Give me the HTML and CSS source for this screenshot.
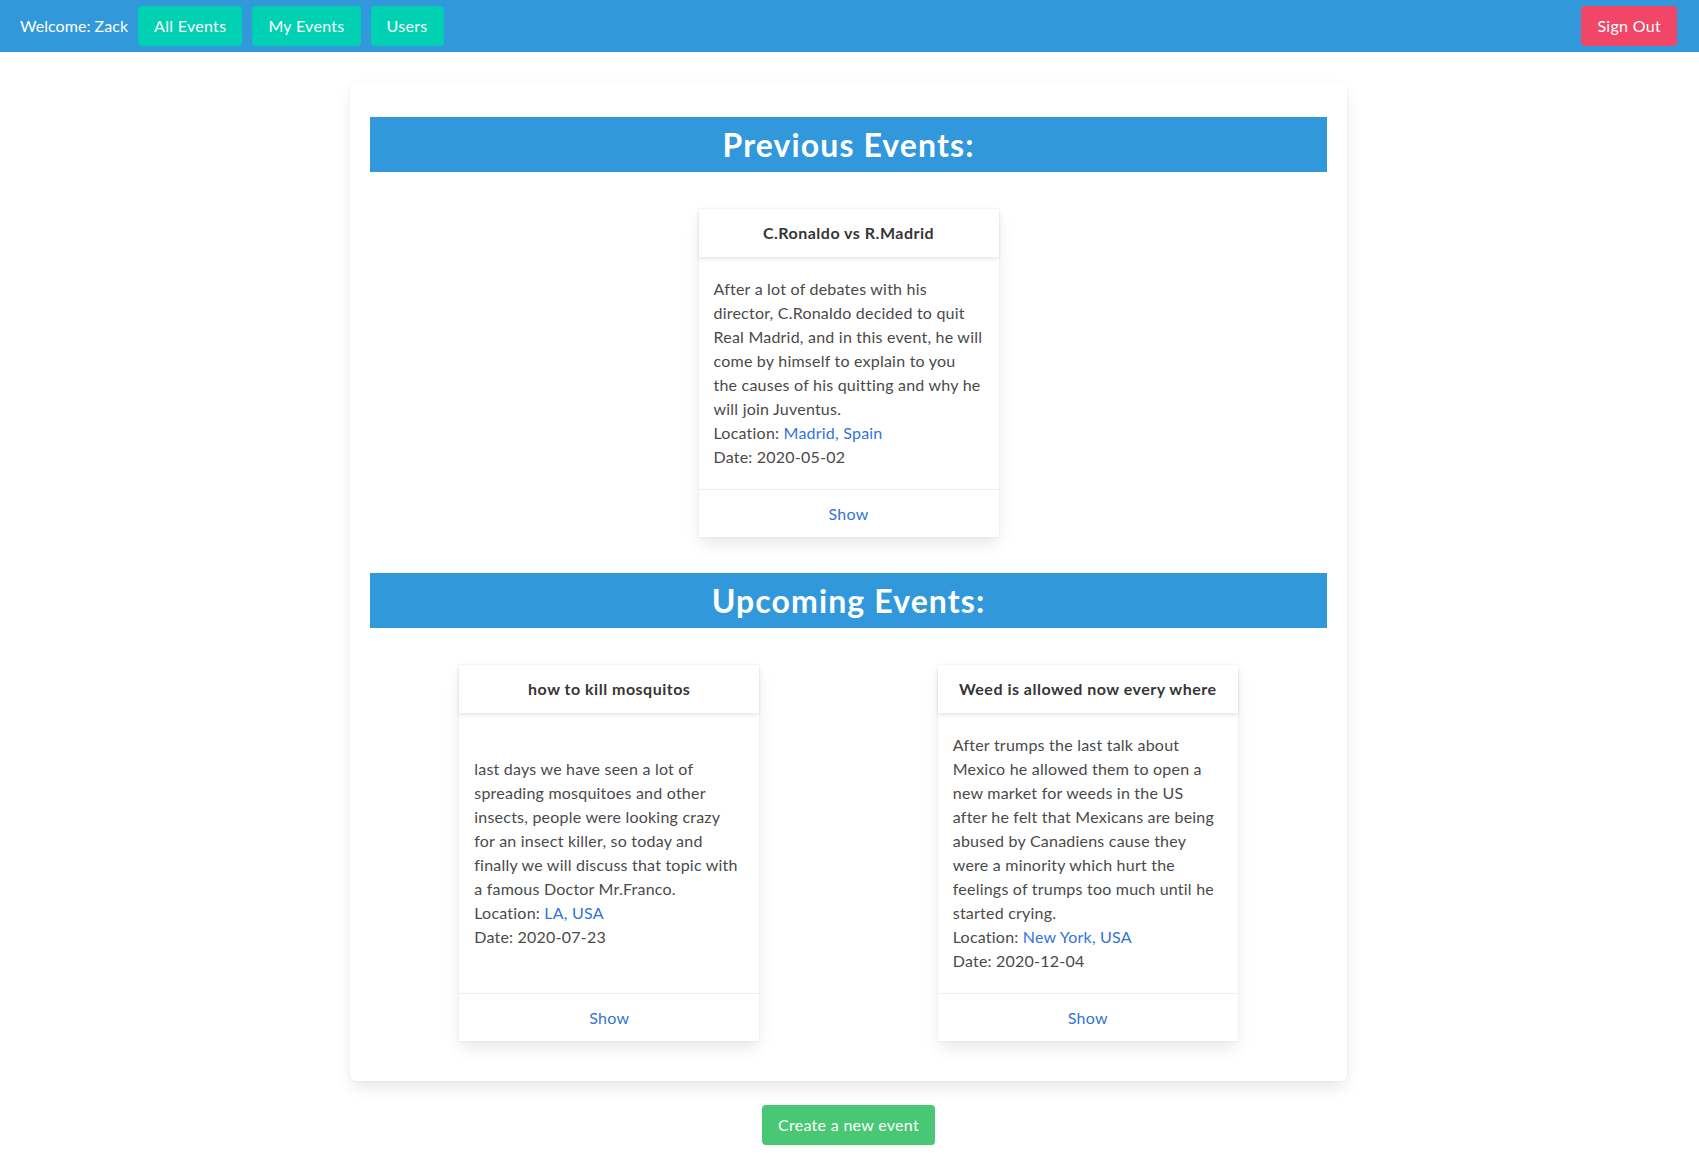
FILE: index.html
```html
<!DOCTYPE html>
<html lang="en">
<head>
<meta charset="utf-8">
<title>Events</title>
<link rel="stylesheet" href="styles.css">
</head>
<body>
<nav class="navbar">
  <div class="nav-start">
    <span class="welcome">Welcome: Zack</span>
    <a class="btn btn-primary" href="#">All Events</a>
    <a class="btn btn-primary" href="#">My Events</a>
    <a class="btn btn-primary" href="#">Users</a>
  </div>
  <div class="nav-end">
    <a class="btn btn-danger" href="#">Sign Out</a>
  </div>
</nav>

<main class="page">
  <div class="box">
    <section class="section">
      <h2 class="section-title">Previous Events:</h2>
      <div class="cards cards-single">
        <div class="card">
          <header class="card-header">C.Ronaldo vs R.Madrid</header>
          <div class="card-content">
            <p>After a lot of debates with his<br>director, C.Ronaldo decided to quit<br>Real Madrid, and in this event, he will<br>come by himself to explain to you<br>the causes of his quitting and why he<br>will join Juventus.</p>
            <p>Location: <a href="#">Madrid, Spain</a></p>
            <p>Date: 2020-05-02</p>
          </div>
          <footer class="card-footer"><a href="#">Show</a></footer>
        </div>
      </div>
    </section>

    <section class="section">
      <h2 class="section-title">Upcoming Events:</h2>
      <div class="cards cards-double">
        <div class="card">
          <header class="card-header">how to kill mosquitos</header>
          <div class="card-content">
            <p>last days we have seen a lot of<br>spreading mosquitoes and other<br>insects, people were looking crazy<br>for an insect killer, so today and<br>finally we will discuss that topic with<br>a famous Doctor Mr.Franco.</p>
            <p>Location: <a href="#">LA, USA</a></p>
            <p>Date: 2020-07-23</p>
          </div>
          <footer class="card-footer"><a href="#">Show</a></footer>
        </div>
        <div class="card">
          <header class="card-header">Weed is allowed now every where</header>
          <div class="card-content">
            <p>After trumps the last talk about<br>Mexico he allowed them to open a<br>new market for weeds in the US<br>after he felt that Mexicans are being<br>abused by Canadiens cause they<br>were a minority which hurt the<br>feelings of trumps too much until he<br>started crying.</p>
            <p>Location: <a href="#">New York, USA</a></p>
            <p>Date: 2020-12-04</p>
          </div>
          <footer class="card-footer"><a href="#">Show</a></footer>
        </div>
      </div>
    </section>
  </div>

  <div class="actions">
    <a class="btn btn-success" href="#">Create a new event</a>
  </div>
</main>
</body>
</html>
```

FILE: styles.css
```css
* { box-sizing: border-box; }

html, body {
  margin: 0;
  padding: 0;
  background: #ffffff;
}

body {
  font-family: "Lato", "Open Sans", sans-serif;
  font-size: 16px;
  line-height: 1.5;
  letter-spacing: 0.22px;
  color: #4a4a4a;
}

a {
  color: #3273dc;
  text-decoration: none;
}

p { margin: 0; }

/* navbar */
.navbar {
  height: 52px;
  background: #3298dc;
  display: flex;
  align-items: center;
  justify-content: space-between;
  padding: 0 22px 0 20px;
}

.nav-start {
  display: flex;
  align-items: center;
  gap: 10px;
}

.welcome {
  color: #ffffff;
  letter-spacing: 0.05px;
}

.btn {
  display: inline-flex;
  align-items: center;
  justify-content: center;
  height: 40px;
  padding: 0 16px;
  border-radius: 4px;
  color: #ffffff;
  font-size: 16px;
  line-height: 1.5;
  letter-spacing: 0.3px;
  white-space: nowrap;
}

.btn-primary { background: #00d1b2; }
.btn-danger { background: #f14668; }
.btn-success { background: #48c774; }

/* main box */
.page {
  padding-top: 30px;
  padding-bottom: 31px;
  padding-right: 2px;
}

.box {
  width: 997px;
  margin: 0 auto;
  background: #ffffff;
  border-radius: 6px;
  box-shadow: 0 0.5em 1em -0.125em rgba(10, 10, 10, 0.1), 0 0 0 1px rgba(10, 10, 10, 0.02);
  padding: 35px 20px 20px;
}

.section {
  padding-bottom: 36px;
}

.section:last-child {
  padding-bottom: 20px;
}

.section-title {
  margin: 0;
  background: #3298dc;
  color: #ffffff;
  text-align: center;
  font-size: 32px;
  font-weight: 700;
  line-height: 1.125;
  letter-spacing: 1.1px;
  padding: 9.5px 0;
}

.cards {
  padding-top: 37px;
}

.cards-single {
  display: flex;
  justify-content: center;
}

.cards-double {
  display: grid;
  grid-template-columns: 1fr 1fr;
  justify-items: center;
}

/* card */
.card {
  width: 300px;
  background: #ffffff;
  display: flex;
  flex-direction: column;
  box-shadow: 0 0.5em 1em -0.125em rgba(10, 10, 10, 0.1), 0 0 0 1px rgba(10, 10, 10, 0.02);
}

.card-header {
  height: 48px;
  display: flex;
  align-items: center;
  justify-content: center;
  padding-bottom: 1px;
  font-weight: 700;
  letter-spacing: 0.5px;
  color: #363636;
  box-shadow: 0 0.125em 0.25em rgba(10, 10, 10, 0.1);
}

.card-content {
  flex: 1;
  display: flex;
  flex-direction: column;
  justify-content: center;
  padding: 20px 15px;
  white-space: nowrap;
}

.card-footer {
  height: 48px;
  border-top: 1px solid #ededed;
  display: flex;
  align-items: center;
  justify-content: center;
}

/* bottom action */
.actions {
  display: flex;
  justify-content: center;
  padding-top: 24px;
}
```
